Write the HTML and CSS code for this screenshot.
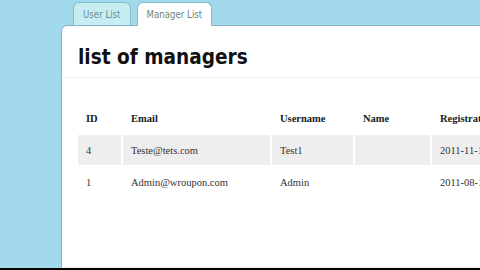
FILE: index.html
```html
<!DOCTYPE html>
<html lang="en">
<head>
    <meta charset="UTF-8">
    <meta name="viewport" content="width=device-width, initial-scale=1.0">
    <title>Managers</title>
    <link rel="stylesheet" href="styles.css">
</head>
<body>
    <div class="tabs">
        <a class="tab" href="#">User List</a>
        <a class="tab active" href="#">Manager List</a>
    </div>
    <div class="panel">
        <h1 class="title">list of managers</h1>
        <table class="grid">
            <thead>
                <tr>
                    <th class="col-id">ID</th>
                    <th class="col-email">Email</th>
                    <th class="col-user">Username</th>
                    <th class="col-name">Name</th>
                    <th class="col-date">Registration</th>
                </tr>
            </thead>
            <tbody>
                <tr class="odd">
                    <td>4</td>
                    <td>Teste@tets.com</td>
                    <td>Test1</td>
                    <td></td>
                    <td>2011-11-14</td>
                </tr>
                <tr>
                    <td>1</td>
                    <td>Admin@wroupon.com</td>
                    <td>Admin</td>
                    <td></td>
                    <td>2011-08-12</td>
                </tr>
            </tbody>
        </table>
    </div>
    <div class="bottom-bar"></div>
</body>
</html>
```

FILE: styles.css
```css
* {
    padding: 0px;
    margin: 0px;
    box-sizing: border-box;
}
body {
    height: 270px;
    display: flex;
    flex-direction: column;
    overflow: hidden;
    background-color: #a2d9ec;
}
.tabs {
    display: flex;
    gap: 6px;
    padding: 2px 0 0 73px;
    height: 25px;
}
.tab {
    height: 23px;
    padding: 0 9px;
    display: flex;
    align-items: center;
    border: 1px solid #84bccb;
    border-bottom: none;
    border-radius: 6px 6px 0 0;
    background-color: #c6eef2;
    color: #6e8c8e;
    font-family: "DejaVu Sans Condensed", "DejaVu Sans", sans-serif;
    font-stretch: condensed;
    font-size: 9.6px;
    text-decoration: none;
}
.tab.active {
    height: 24px;
    margin-bottom: -1px;
    position: relative;
    z-index: 1;
    background-color: #ffffff;
    color: #6e8282;
}
.panel {
    flex: 1;
    margin-left: 61px;
    overflow: hidden;
    background-color: #ffffff;
    border-top: 1px solid #8cb1c2;
    border-left: 1px solid #7fb4c9;
    border-bottom: 1px solid #ececec;
    border-top-left-radius: 6px;
}
.title {
    height: 52px;
    padding: 18px 16px 8px;
    border-bottom: 1px solid #efefef;
    font-family: "DejaVu Sans Condensed", "DejaVu Sans", sans-serif;
    font-stretch: condensed;
    font-size: 20.6px;
    line-height: 26px;
    color: #111111;
}
.grid {
    margin: 23px 0 0 14px;
    border-spacing: 2px;
    table-layout: fixed;
    width: 478px;
    font-family: "Liberation Serif", serif;
    font-size: 10.5px;
    color: #333333;
}
.grid th,
.grid td {
    height: 30px;
    padding: 0 8px;
    text-align: left;
    vertical-align: middle;
    white-space: nowrap;
}
.grid th {
    color: #1a1a1a;
    font-weight: bold;
}
.col-id { width: 43px; }
.col-email { width: 147px; }
.col-user { width: 81px; }
.col-name { width: 75px; }
.col-date { width: 120px; }
.odd td {
    background-color: #eeeeee;
}
.bottom-bar {
    height: 2px;
    background-color: #000000;
}
```
